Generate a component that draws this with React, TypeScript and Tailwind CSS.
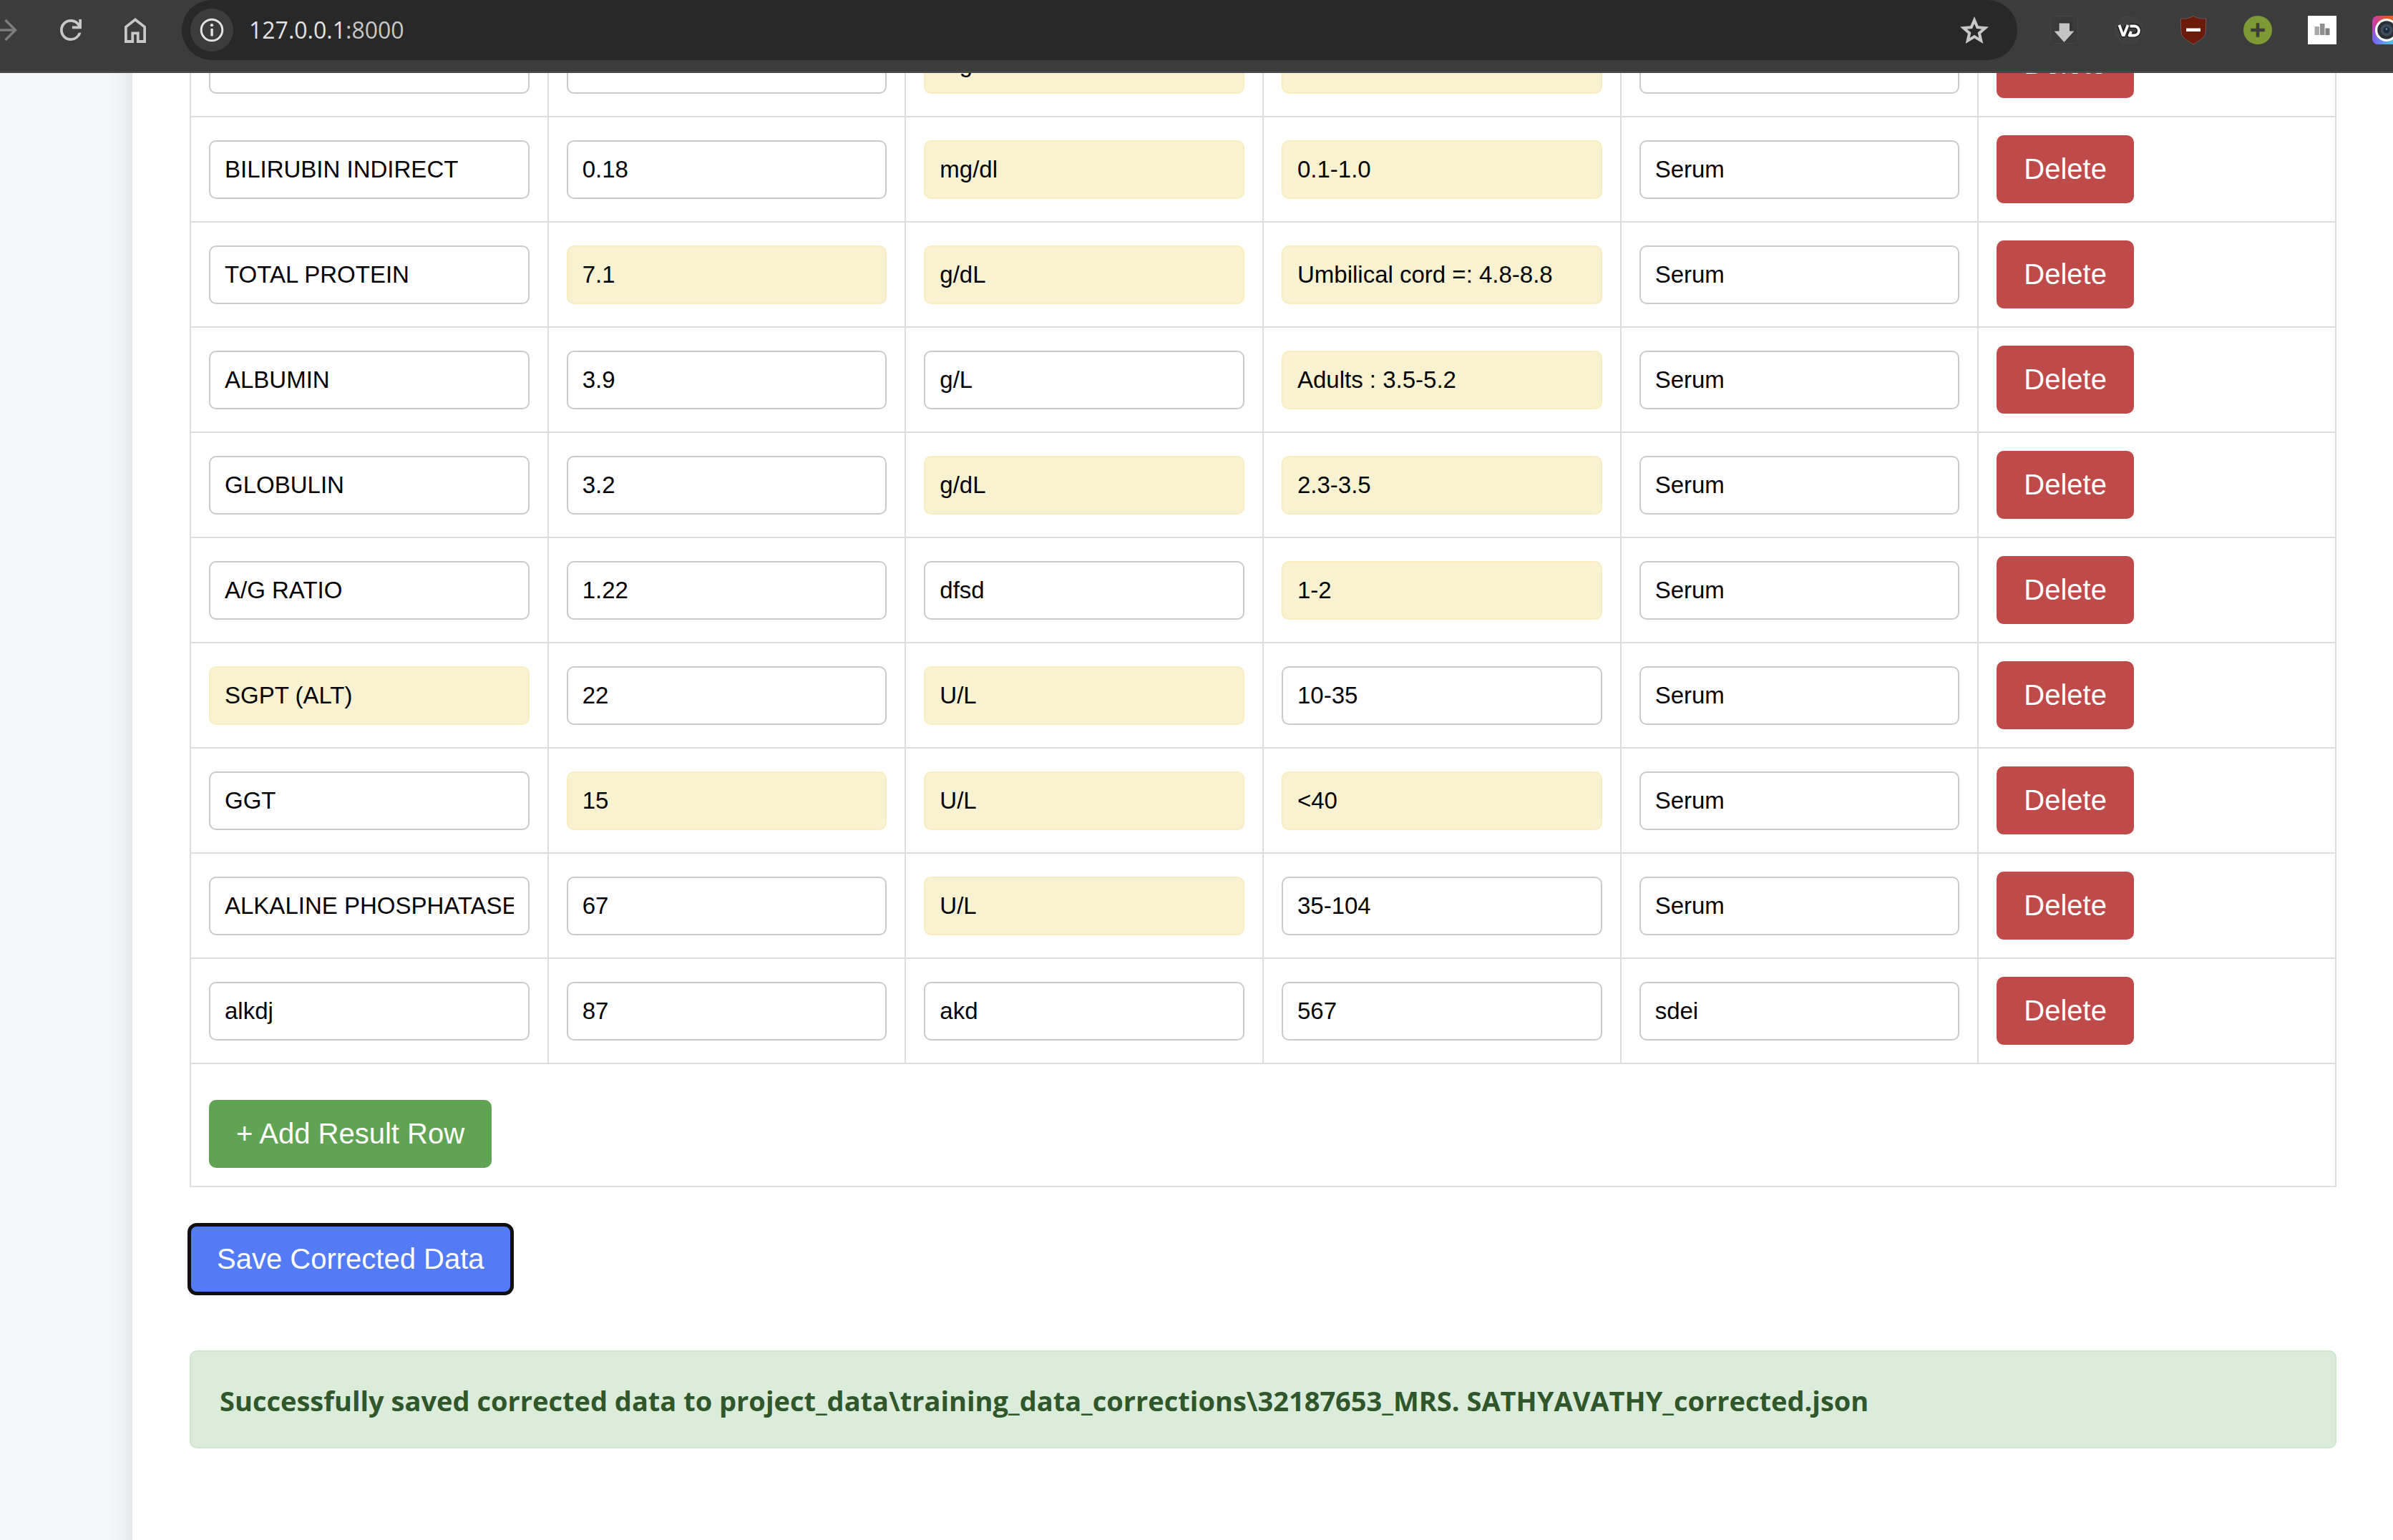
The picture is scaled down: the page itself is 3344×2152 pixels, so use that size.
import React from "react";

type Cell = { value: string; flagged?: boolean };
type Row = Cell[];

const c = (value: string): Cell => ({ value });
const f = (value: string): Cell => ({ value, flagged: true });

const columns = ["Test name", "Value", "Unit", "Reference range", "Specimen"];

const rows: Row[] = [
  [c(""), c(""), f("mg/dl"), f(""), c("")],
  [c("BILIRUBIN INDIRECT"), c("0.18"), f("mg/dl"), f("0.1-1.0"), c("Serum")],
  [c("TOTAL PROTEIN"), f("7.1"), f("g/dL"), f("Umbilical cord =: 4.8-8.8"), c("Serum")],
  [c("ALBUMIN"), c("3.9"), c("g/L"), f("Adults : 3.5-5.2"), c("Serum")],
  [c("GLOBULIN"), c("3.2"), f("g/dL"), f("2.3-3.5"), c("Serum")],
  [c("A/G RATIO"), c("1.22"), c("dfsd"), f("1-2"), c("Serum")],
  [f("SGPT (ALT)"), c("22"), f("U/L"), c("10-35"), c("Serum")],
  [c("GGT"), f("15"), f("U/L"), f("<40"), c("Serum")],
  [c("ALKALINE PHOSPHATASE"), c("67"), f("U/L"), c("35-104"), c("Serum")],
  [c("alkdj"), c("87"), c("akd"), c("567"), c("sdei")],
];

const buttonBase =
  "block h-[95px] rounded-[10px] px-[38px] pb-px font-['Liberation_Sans',Arial,sans-serif] text-[40px] leading-[46px] text-white whitespace-nowrap";

function ForwardIcon() {
  return (
    <svg width="24" height="32" viewBox="0 0 24 32" fill="none" stroke="#7d7d7d" strokeWidth="3.4">
      <path d="M0 16H21" />
      <path d="M7.5 2L21.5 16L7.5 30" />
    </svg>
  );
}

function ReloadIcon() {
  return (
    <svg width="30" height="30" viewBox="160 -800 640 640" fill="#c7c7c7">
      <path d="M480-160q-134 0-227-93t-93-227q0-134 93-227t227-93q69 0 132 28.5T720-690v-110h80v280H520v-80h168q-32-56-87.5-88T480-720q-100 0-170 70t-70 170q0 100 70 170t170 70q77 0 139-44t87-116h84q-28 106-114 173t-196 67Z" />
    </svg>
  );
}

function HomeIcon() {
  return (
    <svg width="30" height="35" viewBox="160 -840 640 720" preserveAspectRatio="none" fill="#c7c7c7">
      <path d="M240-200h120v-240h240v240h120v-360L480-740 240-560v360Zm-80 80v-480l320-240 320 240v480H520v-240h-80v240H160Z" />
    </svg>
  );
}

function InfoIcon() {
  return (
    <svg width="34" height="34" viewBox="0 0 34 34" fill="none">
      <circle cx="17" cy="17" r="14.8" stroke="#e3e3e3" strokeWidth="3" />
      <rect x="15.4" y="15" width="3.4" height="10.5" fill="#e3e3e3" />
      <circle cx="17" cy="10.2" r="2.1" fill="#e3e3e3" />
    </svg>
  );
}

function StarIcon() {
  return (
    <svg width="40" height="38" viewBox="80 -880 800 760" fill="#c7c7c7">
      <path d="m354-287 126-76 126 77-33-144 111-96-146-13-58-136-58 135-146 13 111 97-33 143ZM233-120l65-281L80-590l288-25 112-265 112 265 288 25-218 189 65 281-247-149-247 149Z" />
    </svg>
  );
}

function DownloadExtension() {
  return (
    <svg width="40" height="40" viewBox="0 0 40 40">
      <rect x="0.5" y="0.5" width="38" height="38" rx="5" fill="#3a3a3a" stroke="#444444" />
      <path d="M11 9H30V20H36L20 38L4 20H11Z" fill="#323232" />
      <path d="M12.5 10.5H27V21.5H33.5L19.5 37L5.5 21.5H12.5Z" fill="#c4c4c4" />
    </svg>
  );
}

function VdExtension() {
  return (
    <svg width="40" height="40" viewBox="0 0 40 40" fill="none">
      <circle cx="20" cy="20" r="19" fill="#3f3f3f" stroke="#454545" />
      <g stroke="#1c1c1c" strokeWidth="7" strokeLinejoin="round">
        <path d="M6.5 14L12 27L18 14" />
        <path d="M21 14.5H27.5A6 6 0 0 1 27.5 27H20.5L22.5 22" />
      </g>
      <g stroke="#ffffff" strokeWidth="3.8" strokeLinejoin="round">
        <path d="M6.5 13L11.5 27H13L18.5 13" />
        <path d="M21.5 14.5H27.5A6 6 0 0 1 27.5 27.5H20.5L23 22" />
      </g>
    </svg>
  );
}

function ShieldExtension() {
  return (
    <svg width="40" height="42" viewBox="0 0 40 42">
      <path
        d="M20 1C16.5 4 10 5.5 2.2 5C2.5 13 2.5 19 3.2 25.5C4 32 13 36.5 20 41C27 36.5 36 32 36.8 25.5C37.5 19 37.5 13 37.8 5C30 5.5 23.5 4 20 1Z"
        fill="#6c1a0b"
        stroke="#6a5a58"
        strokeWidth="1"
      />
      <rect x="10" y="18.5" width="20" height="4.5" fill="#ffffff" />
    </svg>
  );
}

function PlusExtension() {
  return (
    <svg width="40" height="40" viewBox="0 0 40 40">
      <circle cx="20" cy="20" r="20" fill="#7d9a37" />
      <path d="M17.5 10H22.5V17.5H30V22.5H22.5V30H17.5V22.5H10V17.5H17.5Z" fill="#3c3c3c" stroke="#6b8a1c" strokeWidth="0.8" />
    </svg>
  );
}

function ChartExtension() {
  return (
    <svg width="40" height="40" viewBox="0 0 40 40">
      <rect width="40" height="40" fill="#ffffff" />
      <rect x="9.5" y="15" width="6.5" height="12" fill="#a9a9a9" />
      <rect x="17" y="11" width="6.5" height="16" fill="#8f8f8f" />
      <rect x="24.5" y="17.5" width="6" height="9.5" fill="#828282" />
    </svg>
  );
}

function CameraExtension() {
  return (
    <svg width="40" height="40" viewBox="0 0 40 40">
      <defs>
        <linearGradient id="camera-top" x1="0" y1="0" x2="1" y2="0">
          <stop offset="0" stopColor="#c93bb5" />
          <stop offset="0.5" stopColor="#e0562a" />
          <stop offset="1" stopColor="#e87a20" />
        </linearGradient>
        <linearGradient id="camera-bottom" x1="0" y1="0" x2="1" y2="0">
          <stop offset="0" stopColor="#7c5cf0" />
          <stop offset="0.6" stopColor="#55b8e8" />
          <stop offset="1" stopColor="#4fd6d6" />
        </linearGradient>
        <linearGradient id="camera-fade" x1="0" y1="0" x2="0" y2="1">
          <stop offset="0.3" stopColor="#ffffff" stopOpacity="0" />
          <stop offset="0.8" stopColor="#ffffff" stopOpacity="1" />
        </linearGradient>
        <mask id="camera-mask">
          <rect width="40" height="40" fill="url(#camera-fade)" />
        </mask>
      </defs>
      <rect width="40" height="40" rx="8" fill="url(#camera-top)" />
      <rect width="40" height="40" rx="8" fill="url(#camera-bottom)" mask="url(#camera-mask)" />
      <circle cx="20" cy="20" r="16" fill="#ffffff" />
      <circle cx="20" cy="20" r="12.8" fill="#2b2f36" />
      <circle cx="20" cy="20" r="8.5" fill="#414c59" />
      <circle cx="20" cy="20" r="4.5" fill="#1d2b3f" />
      <circle cx="20" cy="18.5" r="1.2" fill="#7f9fc4" />
    </svg>
  );
}

const extensions = [
  { name: "Downloader", Icon: DownloadExtension },
  { name: "Video downloader", Icon: VdExtension },
  { name: "Content blocker", Icon: ShieldExtension },
  { name: "Add", Icon: PlusExtension },
  { name: "Statistics", Icon: ChartExtension },
  { name: "Screen capture", Icon: CameraExtension },
];

function BrowserBar() {
  return (
    <header className="relative z-10 flex shrink-0 items-center overflow-hidden border-b-[3px] border-[#464646] bg-[#3c3c3c] pb-[15px]">
      <nav aria-label="Browser" className="flex shrink-0 items-center gap-[60px] pr-[50px]">
        <button aria-label="Forward">
          <ForwardIcon />
        </button>
        <button aria-label="Reload">
          <ReloadIcon />
        </button>
        <button aria-label="Home">
          <HomeIcon />
        </button>
      </nav>
      <div className="flex h-[84px] min-w-0 flex-1 items-center rounded-full bg-[#282828] pr-10 pl-3">
        <button
          aria-label="Site information"
          className="flex size-[60px] shrink-0 items-center justify-center rounded-full bg-[#3c3c3c]"
        >
          <InfoIcon />
        </button>
        <a
          href="#"
          className="ml-[22px] flex-1 font-['Open_Sans',sans-serif] text-[32px] leading-10 text-[#e3e3e3]"
        >
          127.0.0.1<span className="text-[#c7c7c7]">:8000</span>
        </a>
        <button aria-label="Bookmark this tab">
          <StarIcon />
        </button>
      </div>
      <div className="ml-[46px] flex w-[479px] shrink-0 items-center gap-[50px]">
        {extensions.map(({ name, Icon }) => (
          <button key={name} aria-label={name} className="shrink-0">
            <Icon />
          </button>
        ))}
      </div>
    </header>
  );
}

function ResultInput({ cell, label }: { cell: Cell; label: string }) {
  return (
    <input
      type="text"
      aria-label={label}
      defaultValue={cell.value}
      className={
        cell.flagged
          ? "block h-[82px] w-full rounded-[10px] border-2 border-[#f9edc0] bg-[#f9f2d1] px-5 font-['Liberation_Sans',Arial,sans-serif] text-[33px] text-black"
          : "block h-[82px] w-full rounded-[10px] border-2 border-[#cacaca] bg-white px-5 font-['Liberation_Sans',Arial,sans-serif] text-[33px] text-black"
      }
    />
  );
}

export default function App() {
  return (
    <div className="flex h-screen flex-col overflow-hidden bg-[#f5f7f9]">
      <BrowserBar />
      <main className="min-h-0 flex-1 overflow-hidden">
        <div className="-mt-[87px] ml-[185px] min-h-[150%] bg-white pr-[79px] pl-20 shadow-[0_0_38px_rgba(0,0,0,0.12)]">
          <table className="w-full table-fixed border-collapse">
            <tbody>
              {rows.map((row, r) => (
                <tr key={r}>
                  {row.map((cell, i) => (
                    <td key={i} className="border-2 border-[#dddddd] px-[25px] py-0 align-middle">
                      <ResultInput cell={cell} label={`${columns[i]}, row ${r + 1}`} />
                    </td>
                  ))}
                  <td className="border-2 border-[#dddddd] p-[25px] align-middle">
                    <button className={`${buttonBase} bg-[#be4a4a]`}>Delete</button>
                  </td>
                </tr>
              ))}
              <tr>
                <td colSpan={6} className="border-2 border-[#dddddd] px-[25px] pt-[50px] pb-[25px]">
                  <button className={`${buttonBase} bg-[#60a352]`}>+ Add Result Row</button>
                </td>
              </tr>
            </tbody>
          </table>
          <button
            className={`${buttonBase} mt-[53px] bg-[#547bf6] outline-[5px] -outline-offset-2 outline-[#101010] outline-solid`}
          >
            Save Corrected Data
          </button>
          <div
            role="status"
            className="mt-20 rounded-[10px] border-2 border-[#cfe6ce] bg-[#dbecda] px-10 pt-[42px] pb-[38px] font-['Open_Sans',sans-serif] text-[38px] leading-[53px] font-bold text-[#30572b]"
          >
            Successfully saved corrected data to project_data\training_data_corrections\32187653_MRS.
            SATHYAVATHY_corrected.json
          </div>
        </div>
      </main>
    </div>
  );
}
